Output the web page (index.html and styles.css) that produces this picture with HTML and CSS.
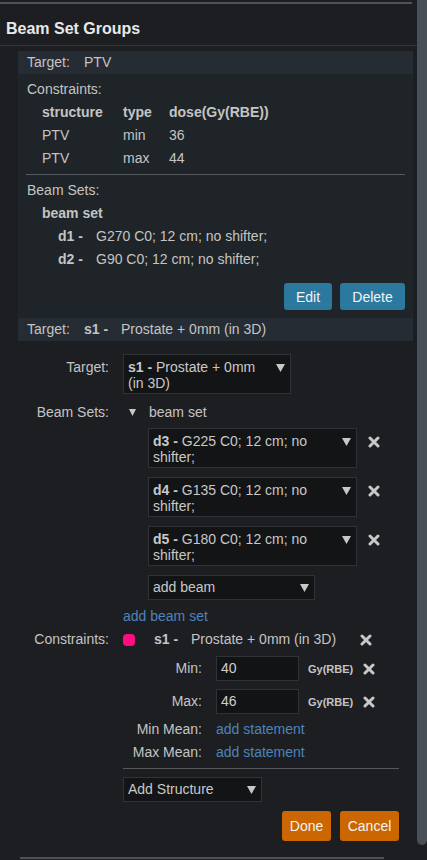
FILE: index.html
```html
<!DOCTYPE html>
<html>
<head>
<meta charset="utf-8">
<link rel="stylesheet" href="styles.css">
</head>
<body>
<div class="page">
  <div class="main">
    <div class="topline"></div>
    <h1 class="title">Beam Set Groups</h1>
    <div class="group">
      <div class="card-head"><span class="lbl">Target:</span><span>PTV</span></div>
      <div class="card-body">
        <div class="row">Constraints:</div>
        <div class="ctable">
          <span class="b">structure</span><span class="b">type</span><span class="b">dose(Gy(RBE))</span>
          <span>PTV</span><span>min</span><span>36</span>
          <span>PTV</span><span>max</span><span>44</span>
        </div>
        <div class="hr"></div>
        <div class="row">Beam Sets:</div>
        <div class="row ind b">beam set</div>
        <div class="beams">
          <span class="b">d1 -</span><span>G270 C0; 12 cm; no shifter;</span>
          <span class="b">d2 -</span><span>G90 C0; 12 cm; no shifter;</span>
        </div>
        <div class="actions">
          <button class="btn blue">Edit</button>
          <button class="btn blue">Delete</button>
        </div>
      </div>
      <div class="card-head"><span class="lbl">Target:</span><span class="b sid">s1 -</span><span>Prostate + 0mm (in 3D)</span></div>
    </div>

    <div class="form">
      <div class="frow">
        <div class="flabel pad">Target:</div>
        <div class="select tall target">
          <div class="stext"><div><span class="b">s1 -</span> <span>Prostate + 0mm</span></div><div>(in 3D)</div></div>
          <svg class="caret" width="9" height="8" viewBox="0 0 9 8"><polygon points="0,0 9,0 4.5,8" fill="#c8c8c8"/></svg>
        </div>
      </div>

      <div class="frow bs">
        <div class="flabel">Beam Sets:</div>
        <div class="fcontent">
          <div class="bshead">
            <svg class="tri" width="7" height="7" viewBox="0 0 7 7"><polygon points="0,0 7,0 3.5,7" fill="#c8c8c8"/></svg>
            <span>beam set</span>
          </div>
          <div class="beamlist">
            <div class="bitem">
              <div class="select tall beam">
                <div class="stext"><div><span class="b">d3 -</span> <span>G225 C0; 12 cm; no</span></div><div>shifter;</div></div>
                <svg class="caret" width="9" height="8" viewBox="0 0 9 8"><polygon points="0,0 9,0 4.5,8" fill="#c8c8c8"/></svg>
              </div>
              <svg class="x" width="12" height="12" viewBox="0 0 12 12"><path d="M2 2L10 10M10 2L2 10" stroke="#c8c8c8" stroke-width="3" stroke-linecap="round"/></svg>
            </div>
            <div class="bitem">
              <div class="select tall beam">
                <div class="stext"><div><span class="b">d4 -</span> <span>G135 C0; 12 cm; no</span></div><div>shifter;</div></div>
                <svg class="caret" width="9" height="8" viewBox="0 0 9 8"><polygon points="0,0 9,0 4.5,8" fill="#c8c8c8"/></svg>
              </div>
              <svg class="x" width="12" height="12" viewBox="0 0 12 12"><path d="M2 2L10 10M10 2L2 10" stroke="#c8c8c8" stroke-width="3" stroke-linecap="round"/></svg>
            </div>
            <div class="bitem">
              <div class="select tall beam">
                <div class="stext"><div><span class="b">d5 -</span> <span>G180 C0; 12 cm; no</span></div><div>shifter;</div></div>
                <svg class="caret" width="9" height="8" viewBox="0 0 9 8"><polygon points="0,0 9,0 4.5,8" fill="#c8c8c8"/></svg>
              </div>
              <svg class="x" width="12" height="12" viewBox="0 0 12 12"><path d="M2 2L10 10M10 2L2 10" stroke="#c8c8c8" stroke-width="3" stroke-linecap="round"/></svg>
            </div>
            <div class="select short addbeam">
              <div class="stext">add beam</div>
              <svg class="caret" width="9" height="8" viewBox="0 0 9 8"><polygon points="0,0 9,0 4.5,8" fill="#c8c8c8"/></svg>
            </div>
          </div>
        </div>
      </div>

      <div class="frow">
        <div class="flabel"></div>
        <a class="link">add beam set</a>
      </div>

      <div class="frow">
        <div class="flabel">Constraints:</div>
        <div class="fcontent">
          <div class="cstruct">
            <span class="dot"></span>
            <span class="b sid2">s1 -</span>
            <span>Prostate + 0mm (in 3D)</span>
            <svg class="x cx" width="12" height="12" viewBox="0 0 12 12"><path d="M2 2L10 10M10 2L2 10" stroke="#c8c8c8" stroke-width="3" stroke-linecap="round"/></svg>
          </div>
          <div class="crow minrow">
            <div class="clabel">Min:</div>
            <div class="input">40</div>
            <span class="unit">Gy(RBE)</span>
            <svg class="x" width="12" height="12" viewBox="0 0 12 12"><path d="M2 2L10 10M10 2L2 10" stroke="#c8c8c8" stroke-width="3" stroke-linecap="round"/></svg>
          </div>
          <div class="crow maxrow">
            <div class="clabel">Max:</div>
            <div class="input">46</div>
            <span class="unit">Gy(RBE)</span>
            <svg class="x" width="12" height="12" viewBox="0 0 12 12"><path d="M2 2L10 10M10 2L2 10" stroke="#c8c8c8" stroke-width="3" stroke-linecap="round"/></svg>
          </div>
          <div class="crow meanrow first">
            <div class="clabel">Min Mean:</div>
            <a class="link">add statement</a>
          </div>
          <div class="crow meanrow">
            <div class="clabel">Max Mean:</div>
            <a class="link">add statement</a>
          </div>
          <div class="hr2"></div>
          <div class="select short addstruct">
            <div class="stext">Add Structure</div>
            <svg class="caret" width="9" height="8" viewBox="0 0 9 8"><polygon points="0,0 9,0 4.5,8" fill="#c8c8c8"/></svg>
          </div>
          <div class="factions">
            <button class="btn orange">Done</button>
            <button class="btn orange">Cancel</button>
          </div>
        </div>
      </div>
    </div>
    <div class="bottomline"></div>
  </div>
  <div class="scroll"></div>
</div>
</body>
</html>
```

FILE: styles.css
```css
* { box-sizing: border-box; }
html, body { margin: 0; padding: 0; }
body {
  background: #1d1e21;
  color: #c4c4c4;
  font-family: "Liberation Sans", Arial, sans-serif;
  font-size: 14px;
  width: 427px;
  height: 860px;
  overflow: hidden;
}
.page { display: flex; height: 860px; }
.main { width: 417px; flex: none; }
.scroll {
  width: 10px;
  height: 845px;
  background: #495057;
  border-radius: 0 0 5px 5px;
}
.topline {
  margin-top: 2px;
  height: 2px;
  width: 412px;
  background: #4e5155;
}
.title {
  margin: 0;
  font-size: 16px;
  font-weight: bold;
  color: #e8e8e8;
  line-height: 20px;
  padding: 15px 0 6px 6px;
  border-bottom: 1px solid #33373b;
}
.group {
  margin: 5px 4px 0 18px;
}
.card-head {
  background: #262c33;
  height: 23px;
  line-height: 23px;
  padding-left: 9px;
  display: flex;
}
.card-head .lbl { width: 57px; }
.card-head .sid { width: 37px; }
.card-body {
  background: #1f2428;
  padding: 4px 8px 8px 9px;
}
.row { line-height: 23px; }
.ind { padding-left: 15px; }
.b { font-weight: bold; }
.ctable {
  display: grid;
  grid-template-columns: 81px 46px 1fr;
  line-height: 23px;
  padding-left: 15px;
}
.hr {
  height: 1px;
  background: #55595d;
  margin: 4px 0 4px -1px;
}
.beams {
  display: grid;
  grid-template-columns: 38px 1fr;
  line-height: 23px;
  padding-left: 31px;
}
.actions {
  display: flex;
  justify-content: flex-end;
  gap: 8px;
  margin-top: 12px;
}
.btn {
  font-family: "Liberation Sans", Arial, sans-serif;
  font-size: 14px;
  color: #f4f4f4;
  border: none;
  border-radius: 3px;
  padding: 0;
}
.blue { background: #2b799f; height: 27px; }
.actions .btn:first-child { width: 48px; }
.actions .btn:last-child { width: 65px; }
.orange { background: #cc6600; height: 30px; }
.factions .btn:first-child { width: 49px; }
.factions .btn:last-child { width: 59px; }

.form { padding: 13px 0 0 18px; }
.frow { display: flex; align-items: flex-start; }
.flabel {
  width: 91px;
  margin-right: 14px;
  text-align: right;
  line-height: 23px;
  flex: none;
}
.flabel.pad { line-height: 16px; padding-top: 5px; }
.select {
  background: #131416;
  border: 1px solid #2f3236;
  position: relative;
  color: #c8c8c8;
}
.select .caret { position: absolute; right: 5px; }
.tall .stext { line-height: 16px; padding: 4px 0 2px 4px; height: 38px; white-space: nowrap; }
.tall .caret { top: 9px; }
.short { height: 25px; }
.short .stext { line-height: 23px; padding-left: 4px; }
.short .caret { top: 8px; }
.target { width: 168px; }
.fcontent { flex: 1; }
.bs { margin-top: 7px; }
.bshead { display: flex; align-items: center; line-height: 23px; }
.bshead .tri { margin: 0 13px 0 6px; }
.beamlist { padding-left: 25px; margin-top: 4px; }
.bitem { display: flex; align-items: flex-start; margin-bottom: 9px; }
.beam { width: 209px; }
.bitem .x { margin: 8px 0 0 11px; }
.addbeam { width: 167px; }
.link { color: #4d84ba; line-height: 23px; display: block; }
.frow > .link { margin-top: 5px; }
.cstruct { display: flex; align-items: center; line-height: 23px; }
.dot {
  width: 12px;
  height: 12px;
  border-radius: 4px;
  background: #ff0c80;
  margin-right: 19px;
}
.sid2 { width: 37px; }
.cx { margin-left: 24px; }
.crow { display: flex; align-items: center; }
.clabel { width: 79px; margin-right: 14px; text-align: right; line-height: 23px; }
.input {
  width: 83px;
  height: 25px;
  background: #121315;
  border: 1px solid #2f3236;
  line-height: 23px;
  padding-left: 4px;
  font-size: 14px;
  color: #cfcfcf;
}
.unit { font-size: 11px; font-weight: bold; margin-left: 9px; width: 55px; }
.minrow { margin-top: 5px; }
.maxrow { margin-top: 8px; }
.meanrow.first { margin-top: 4px; }
.hr2 { height: 1px; background: #55595d; width: 276px; margin-top: 4px; }
.addstruct { width: 139px; margin-top: 8px; }
.factions { display: flex; justify-content: flex-end; gap: 9px; width: 276px; margin-top: 9px; }
.bottomline { margin: 16px 0 0 20px; width: 364px; height: 2px; background: #4e5155; }
```
